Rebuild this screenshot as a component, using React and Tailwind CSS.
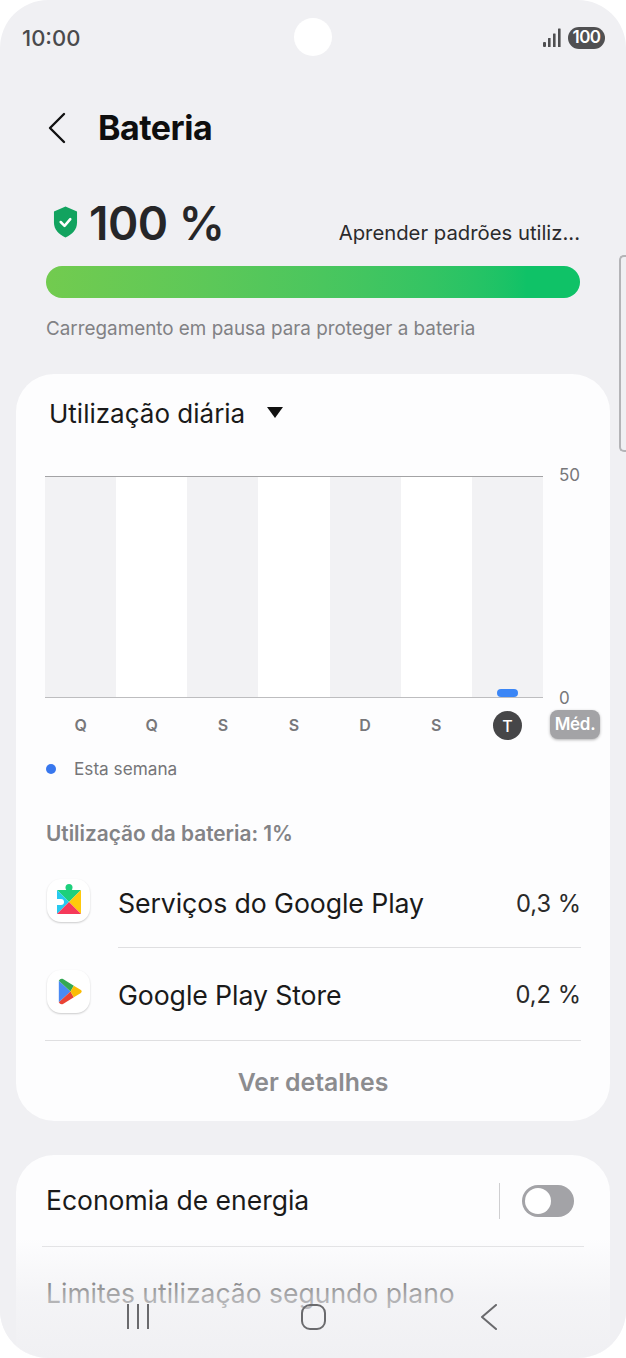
import React from "react";

const days = ["Q", "Q", "S", "S", "D", "S"];

// Weekly chart columns alternate between grey and white
function Chart() {
  return (
    <div className="relative ml-[29px] mt-[46px] h-[222px] w-[498px] border-y border-t-[#a3a3a5] border-b-[#bdbdbf] grid grid-cols-7">
      {[0, 1, 2, 3, 4, 5, 6].map((i) => (
        <div key={i} className={i % 2 === 0 ? "bg-[#f2f2f4]" : "bg-white"} />
      ))}
      <div className="absolute right-[25px] bottom-0 h-[8px] w-[21px] rounded-[4px] bg-[#3b86f6]" />
      <span className="absolute left-[514px] top-[-12px] text-[17px] leading-[20px] text-[#77777a]">50</span>
      <span className="absolute left-[514px] bottom-[-11px] text-[17px] leading-[20px] text-[#77777a]">0</span>
    </div>
  );
}

function PlayServicesIcon() {
  return (
    <svg className="mt-[-3px]" width="24" height="30" viewBox="0 0 24 30">
      <circle cx="12" cy="3.5" r="3.5" fill="#1dd07c" />
      <path d="M0 6h24L12 18z" fill="#1dd07c" />
      <path d="M0 6l12 12L0 30z" fill="#27c9f0" />
      <path d="M24 6v24L12 18z" fill="#ffc90c" />
      <path d="M0 30l12-12 12 12z" fill="#f6395a" />
      <path d="M0 15h4a3 3 0 0 1 0 6H0z" fill="#fff" />
    </svg>
  );
}

function PlayStoreIcon() {
  return (
    <svg className="ml-[3px]" width="25" height="27" viewBox="0 0 30 32">
      <path d="M1 3v26l14-13z" fill="#4a8af4" />
      <path d="M1 3c1-2 3-3 5-2l13 8-4 7z" fill="#34a853" />
      <path d="M1 29c1 2 3 3 5 2l13-8-4-7z" fill="#ea4335" />
      <path d="M19 9l8 5c2 1 2 3 0 4l-8 5-4-7z" fill="#fbbc04" />
    </svg>
  );
}

function AppRow({ name, value, icon, divider, textClass, iconClass }) {
  return (
    <div className="flex h-[92px]">
      <div className={`flex w-[73px] shrink-0 items-center pl-[2px] ${iconClass}`}>
        <div className="flex h-[43px] w-[43px] items-center justify-center rounded-[14px] bg-white shadow-[0_1px_2px_rgba(0,0,0,0.2)]">
          {icon}
        </div>
      </div>
      <div className={`flex flex-1 items-center justify-between ${textClass} ${divider ? "border-b border-[#dfdfe1]" : ""}`}>
        <span className="text-[26.7px] tracking-[-0.1px] text-[#1a1a1a]">{name}</span>
        <span className="text-[23.7px] text-[#2a2a2a]">{value}</span>
      </div>
    </div>
  );
}

export default function App() {
  return (
    <div className="bg-white" style={{ fontFamily: "Inter, 'Noto Sans', sans-serif" }}>
      <div className="relative h-[1358px] w-[626px] overflow-hidden rounded-[48px] bg-[#f0f0f3]">
        {/* status bar */}
        <div className="flex h-[76px] items-center justify-between pl-[22px] pr-[21px]">
          <span className="text-[22px] font-medium text-[#4a4a4c]">10:00</span>
          <div className="flex items-center gap-[7px]">
            <svg width="18" height="20" viewBox="0 0 18 20" fill="#4f4f51">
              <rect x="0" y="14" width="3" height="5" rx="1" />
              <rect x="5" y="10" width="2.6" height="9" rx="0.5" />
              <rect x="10" y="5.5" width="2.6" height="13.5" rx="0.5" />
              <rect x="15" y="0.5" width="2.6" height="18.5" rx="0.5" />
            </svg>
            <span className="flex h-[22px] w-[37px] items-center justify-center rounded-full bg-[#505052] text-[17px] font-semibold tracking-[-0.6px] text-white">100</span>
          </div>
        </div>

        {/* title row */}
        <div className="flex h-[102px] items-center pl-[48px]">
          <svg className="mt-[2px]" width="18" height="32" viewBox="0 0 18 32" fill="none" stroke="#111" strokeWidth="2.4" strokeLinecap="round" strokeLinejoin="round">
            <path d="M16 2 2 16l14 14" />
          </svg>
          <span className="ml-[32px] text-[34px] font-bold tracking-[-0.5px] text-[#0e0e0e]">Bateria</span>
        </div>

        {/* battery summary */}
        <div className="px-[46px]">
          <div className="flex h-[86px] items-end justify-between pb-[13px]">
            <div className="flex items-center">
              <svg className="ml-[7px] mt-[-3px]" width="25" height="32" viewBox="0 0 26 33">
                <path d="M13 0.5 25 5.5V17c0 7.5-5 12.5-12 15.5C6 29.5 1 24.5 1 17V5.5z" fill="#12a35f" />
                <path d="M8 16.5l4 4 6-7" fill="none" stroke="#fff" strokeWidth="2.6" strokeLinecap="round" strokeLinejoin="round" />
              </svg>
              <span className="ml-[11px] text-[46px] font-semibold leading-[56px] tracking-[-0.5px] text-[#262628]">100 %</span>
            </div>
            <span className="mb-[4px] text-[20.3px] leading-[28px] text-[#2a2a2c]">Aprender padrões utiliz...</span>
          </div>
          <div className="mt-[2px] h-[32px] rounded-full bg-gradient-to-r from-[#72cb4f] to-[#0fc267] to-90%" />
          <p className="mt-[19px] text-[18.85px] leading-[24px] text-[#818184]">Carregamento em pausa para proteger a bateria</p>
        </div>

        {/* daily usage card */}
        <div className="mx-[16px] mt-[33px] h-[747px] rounded-[38px] bg-[#fdfdfe] pt-[22px]">
          <div className="flex h-[34px] items-center pl-[33px]">
            <span className="text-[26px] text-[#1a1a1a]">Utilização diária</span>
            <svg className="ml-[22px]" width="16" height="12" viewBox="0 0 16 12"><path d="M0 0h16L8 11z" fill="#111" /></svg>
          </div>
          <Chart />

          <div className="relative ml-[29px] mt-[13px] grid h-[30px] w-[498px] grid-cols-7 text-center text-[16px] font-semibold text-[#77777a]">
            {days.map((d, i) => (
              <span key={i} className="leading-[28px]">{d}</span>
            ))}
            <span className="mx-auto flex h-[29px] w-[29px] items-center justify-center rounded-full bg-[#464648] font-medium text-white">T</span>
            <span className="absolute left-[505px] top-[-1px] flex h-[29px] w-[50px] items-center justify-center rounded-[8px] bg-[#a3a3a6] text-[17px] font-semibold tracking-[-0.3px] text-white shadow-[0_1px_3px_rgba(0,0,0,0.3)]">Méd.</span>
          </div>

          <div className="ml-[30px] mt-[16px] flex h-[24px] items-center">
            <span className="h-[10px] w-[10px] rounded-full bg-[#3877ee]" />
            <span className="ml-[18px] text-[17.2px] text-[#757578]">Esta semana</span>
          </div>

          <p className="ml-[30px] mt-[40px] text-[20.8px] font-semibold leading-[26px] text-[#838386]">Utilização da bateria: 1%</p>

          <div className="mx-[29px] mt-[9px]">
            <AppRow name="Serviços do Google Play" value="0,3 %" icon={<PlayServicesIcon />} divider textClass="pt-[4px]" iconClass="pb-[4px]" />
            <div className="border-b border-[#dfdfe1]">
              <AppRow name="Google Play Store" value="0,2 %" icon={<PlayStoreIcon />} textClass="pt-[2px]" iconClass="pb-[6px]" />
            </div>
          </div>
          <p className="mt-[25px] text-center text-[24.8px] font-semibold leading-[32px] text-[#8c8c8f]">Ver detalhes</p>
        </div>

        {/* power options card */}
        <div className="mx-[16px] mt-[34px] h-[300px] rounded-[38px] bg-[#fdfdfe]">
          <div className="mx-[26px] flex h-[92px] items-center border-b border-[#e2e2e4]">
            <span className="ml-[4px] flex-1 text-[26.5px] text-[#1a1a1a]">Economia de energia</span>
            <span className="h-[36px] w-px bg-[#cfcfd1]" />
            <span className="ml-[22px] mr-[10px] flex h-[32px] w-[52px] items-center rounded-full bg-[#a3a3a7] pl-[3px]">
              <span className="h-[26px] w-[26px] rounded-full bg-white" />
            </span>
          </div>
          <p className="ml-[30px] mt-[28px] text-[26.5px] leading-[36px] text-[#1a1a1a]">Limites utilização segundo plano</p>
        </div>

        {/* fade behind the navigation bar */}
        <div className="absolute inset-x-0 bottom-0 h-[120px] bg-gradient-to-b from-[#f0f0f3]/0 via-[#f0f0f3]/70 to-[#f0f0f3]" />

        {/* camera cut-out */}
        <div className="absolute left-[294px] top-[18px] h-[38px] w-[38px] rounded-full bg-white" />

        {/* edge panel handle */}
        <div className="absolute right-0 top-[255px] h-[197px] w-[7px] rounded-l-[5px] border-y-2 border-l-2 border-[#b4b4b7]" />

        {/* navigation bar */}
        <div className="absolute bottom-[28px] left-0 h-[26px] w-full">
          <div className="absolute left-[127px] top-0 flex h-[25px] gap-[8px]">
            <span className="w-[2px] bg-[#6a6a6d]" />
            <span className="w-[2px] bg-[#6a6a6d]" />
            <span className="w-[2px] bg-[#6a6a6d]" />
          </div>
          <div className="absolute left-[301px] top-0 h-[26px] w-[25px] rounded-[9px] border-2 border-[#6a6a6d]" />
          <svg className="absolute left-[480px] top-0" width="18" height="26" viewBox="0 0 18 26" fill="none" stroke="#6a6a6d" strokeWidth="2" strokeLinecap="round" strokeLinejoin="round">
            <path d="M16 1 2 13l14 12" />
          </svg>
        </div>
      </div>
    </div>
  );
}
